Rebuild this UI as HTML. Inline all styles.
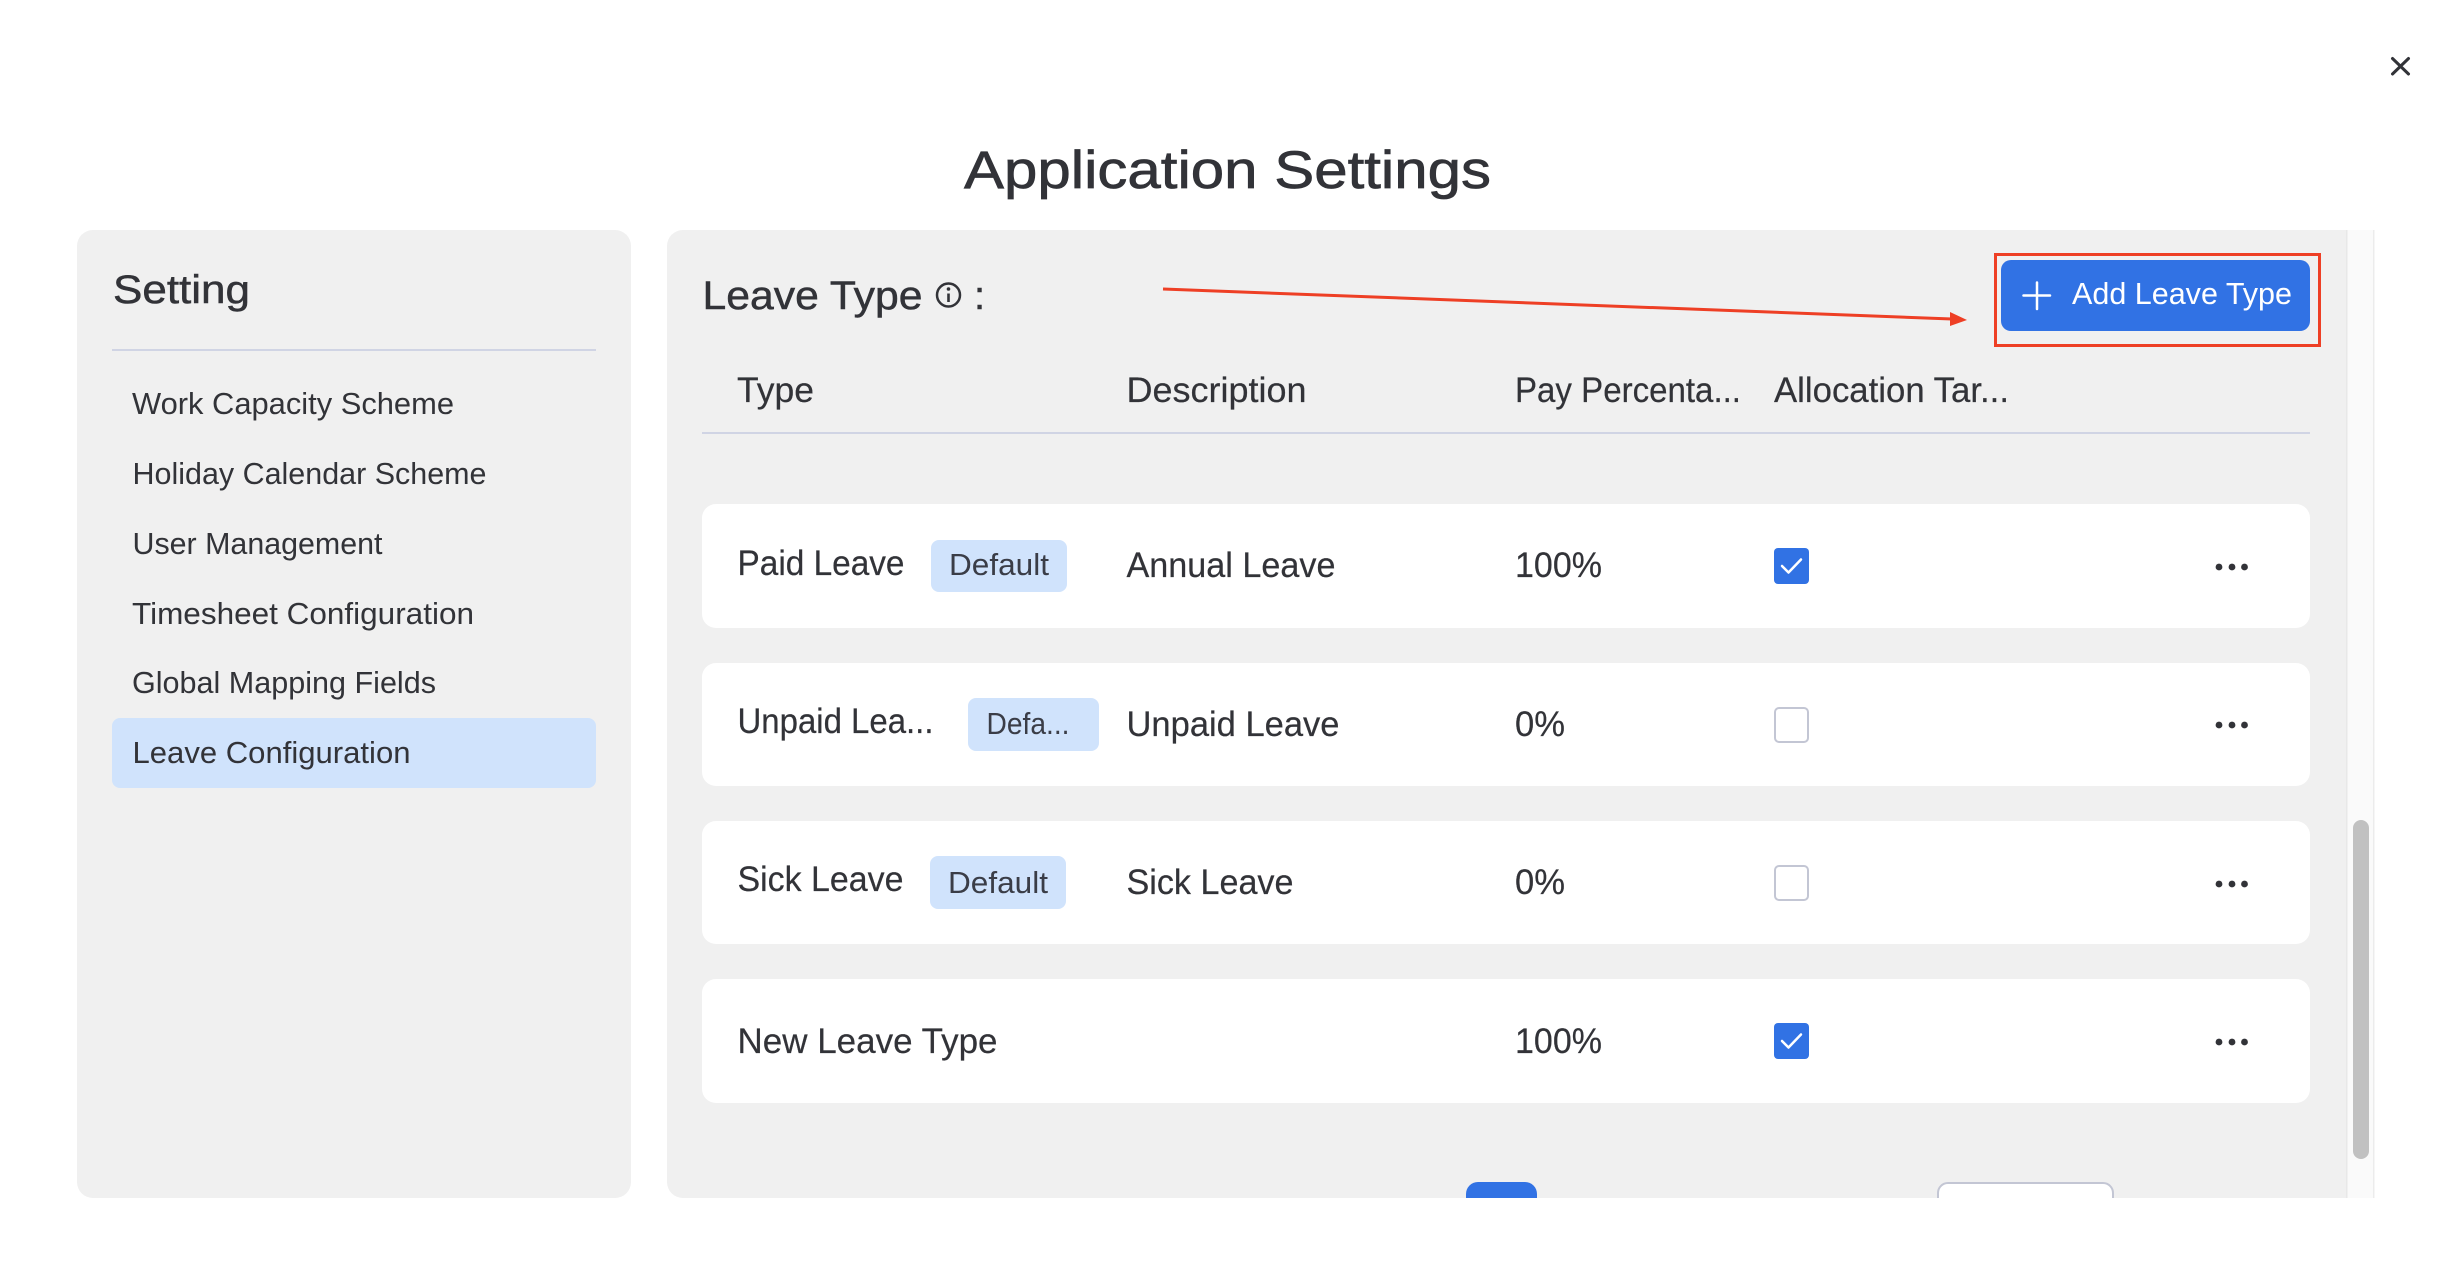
<!DOCTYPE html>
<html lang="en">
<head>
<meta charset="utf-8">
<title>Application Settings</title>
<style>
html,body{margin:0;padding:0;width:2448px;height:1266px;overflow:hidden;background:#fff}
svg{display:block}
text{font-family:"Liberation Sans",sans-serif;fill:#323338}
.h{font-size:53px;stroke:#323338;stroke-width:.7px}
.s{font-size:40px;stroke:#323338;stroke-width:.5px}
.t{font-size:35px;stroke:#323338;stroke-width:.2px}
.m{font-size:31px}
.r{font-size:35px;stroke:#323338;stroke-width:.2px}
.b{font-size:31px;fill:#3a3d47}
</style>
</head>
<body>
<svg width="2448" height="1266" viewBox="0 0 2448 1266" xmlns="http://www.w3.org/2000/svg">
<defs>
<clipPath id="clip"><rect x="0" y="230" width="2448" height="968"/></clipPath>
</defs>
<rect width="2448" height="1266" fill="#fff"/>

<!-- close -->
<path d="M2392.500 58.500L2408.500 74M2408.500 58.500L2392.500 74" stroke="#323338" stroke-width="3" stroke-linecap="round" fill="none"/>

<!-- title -->
<text class="h" x="964" y="188" textLength="527" lengthAdjust="spacingAndGlyphs">Application Settings</text>

<!-- left panel -->
<path d="M77 246a16 16 0 0 1 16-16H615a16 16 0 0 1 16 16V1182a16 16 0 0 1-16 16H93a16 16 0 0 1-16-16Z" fill="#f0f0f0"/>
<text class="s" x="113" y="303" textLength="137" lengthAdjust="spacingAndGlyphs">Setting</text>
<rect x="112" y="349" width="484" height="2" fill="#d0d4e4"/>
<text class="m" x="132" y="414" textLength="322" lengthAdjust="spacingAndGlyphs">Work Capacity Scheme</text>
<text class="m" x="132.500" y="484" textLength="354" lengthAdjust="spacingAndGlyphs">Holiday Calendar Scheme</text>
<text class="m" x="132.500" y="554" textLength="250" lengthAdjust="spacingAndGlyphs">User Management</text>
<text class="m" x="132" y="624" textLength="342" lengthAdjust="spacingAndGlyphs">Timesheet Configuration</text>
<text class="m" x="132" y="693" textLength="304" lengthAdjust="spacingAndGlyphs">Global Mapping Fields</text>
<rect x="112" y="718" width="484" height="70" rx="8" fill="#d0e3fc"/>
<text class="m" x="132.500" y="763" textLength="278" lengthAdjust="spacingAndGlyphs">Leave Configuration</text>

<!-- right panel -->
<path d="M683 230H2347V1198H683a16 16 0 0 1-16-16V246a16 16 0 0 1 16-16Z" fill="#f0f0f0"/>

<!-- scrollbar -->
<rect x="2346" y="230" width="28" height="968" fill="#fafafa"/>
<rect x="2346" y="230" width="1.500" height="968" fill="#e8e8e8"/>
<rect x="2373" y="230" width="1.500" height="968" fill="#ececec"/>
<rect x="2353" y="820" width="16" height="339" rx="8" fill="#c1c1c1"/>

<!-- header -->
<text class="s" x="702.500" y="309" textLength="220" lengthAdjust="spacingAndGlyphs">Leave Type</text>
<circle cx="948.500" cy="295" r="11.500" fill="none" stroke="#323338" stroke-width="2.500"/>
<circle cx="948.500" cy="289" r="1.800" fill="#323338"/>
<path d="M948.500 293.500V302" stroke="#323338" stroke-width="2.600" fill="none"/>
<text class="s" x="974" y="309">:</text>

<!-- annotation -->
<path d="M1163 289L1952 319" stroke="#ee3f25" stroke-width="3" fill="none"/>
<path d="M1950 312L1967 320L1950 326Z" fill="#ee3f25"/>
<rect x="1995.500" y="254.500" width="324" height="91" fill="none" stroke="#ee3f25" stroke-width="3"/>

<!-- add button -->
<rect x="2001" y="260" width="309" height="71" rx="10" fill="#3172e4"/>
<path d="M2023.500 295.500H2050M2037 282.500V309" stroke="#fff" stroke-width="2.500" stroke-linecap="round" fill="none"/>
<text class="m" x="2072" y="304" textLength="220" lengthAdjust="spacingAndGlyphs" style="fill:#fff">Add Leave Type</text>

<!-- table head -->
<text class="t" x="737" y="402" textLength="77" lengthAdjust="spacingAndGlyphs">Type</text>
<text class="t" x="1126.500" y="402" textLength="180" lengthAdjust="spacingAndGlyphs">Description</text>
<text class="t" x="1515" y="402" textLength="226" lengthAdjust="spacingAndGlyphs">Pay Percenta...</text>
<text class="t" x="1774" y="402" textLength="235" lengthAdjust="spacingAndGlyphs">Allocation Tar...</text>
<rect x="702" y="432" width="1608" height="2" fill="#d0d4e4"/>

<!-- rows -->
<rect x="702" y="504" width="1608" height="124" rx="14" fill="#fff"/>
<rect x="702" y="663" width="1608" height="123" rx="14" fill="#fff"/>
<rect x="702" y="821" width="1608" height="123" rx="14" fill="#fff"/>
<rect x="702" y="979" width="1608" height="124" rx="14" fill="#fff"/>

<!-- row 1 -->
<text class="r" x="737.500" y="575" textLength="167" lengthAdjust="spacingAndGlyphs">Paid Leave</text>
<rect x="931" y="540" width="136" height="52" rx="8" fill="#d0e3fc"/>
<text class="b" x="949" y="575" textLength="100" lengthAdjust="spacingAndGlyphs">Default</text>
<text class="r" x="1126.500" y="577" textLength="209" lengthAdjust="spacingAndGlyphs">Annual Leave</text>
<text class="r" x="1515" y="577" textLength="87" lengthAdjust="spacingAndGlyphs">100%</text>
<rect x="1774" y="548" width="35" height="36" rx="4" fill="#3172e4"/>
<path d="M1782 566L1788.500 572.500L1801 559.500" stroke="#fff" stroke-width="2.500" stroke-linecap="round" stroke-linejoin="round" fill="none"/>
<circle cx="2219" cy="567" r="3.400" fill="#323338"/><circle cx="2232" cy="567" r="3.400" fill="#323338"/><circle cx="2244.500" cy="567" r="3.400" fill="#323338"/>

<!-- row 2 -->
<text class="r" x="737.500" y="733" textLength="196" lengthAdjust="spacingAndGlyphs">Unpaid Lea...</text>
<rect x="968" y="698" width="131" height="53" rx="8" fill="#d0e3fc"/>
<text class="b" x="986.500" y="734" textLength="83" lengthAdjust="spacingAndGlyphs">Defa...</text>
<text class="r" x="1126.500" y="736" textLength="213" lengthAdjust="spacingAndGlyphs">Unpaid Leave</text>
<text class="r" x="1515" y="736" textLength="50" lengthAdjust="spacingAndGlyphs">0%</text>
<rect x="1775" y="708" width="33" height="34" rx="4" fill="#fff" stroke="#c3c6d4" stroke-width="2"/>
<circle cx="2219" cy="725" r="3.400" fill="#323338"/><circle cx="2232" cy="725" r="3.400" fill="#323338"/><circle cx="2244.500" cy="725" r="3.400" fill="#323338"/>

<!-- row 3 -->
<text class="r" x="737.500" y="891" textLength="166" lengthAdjust="spacingAndGlyphs">Sick Leave</text>
<rect x="930" y="856" width="136" height="53" rx="8" fill="#d0e3fc"/>
<text class="b" x="948" y="893" textLength="100" lengthAdjust="spacingAndGlyphs">Default</text>
<text class="r" x="1126.500" y="894" textLength="167" lengthAdjust="spacingAndGlyphs">Sick Leave</text>
<text class="r" x="1515" y="894" textLength="50" lengthAdjust="spacingAndGlyphs">0%</text>
<rect x="1775" y="866" width="33" height="34" rx="4" fill="#fff" stroke="#c3c6d4" stroke-width="2"/>
<circle cx="2219" cy="884" r="3.400" fill="#323338"/><circle cx="2232" cy="884" r="3.400" fill="#323338"/><circle cx="2244.500" cy="884" r="3.400" fill="#323338"/>

<!-- row 4 -->
<text class="r" x="737.500" y="1053" textLength="260" lengthAdjust="spacingAndGlyphs">New Leave Type</text>
<text class="r" x="1515" y="1053" textLength="87" lengthAdjust="spacingAndGlyphs">100%</text>
<rect x="1774" y="1023" width="35" height="36" rx="4" fill="#3172e4"/>
<path d="M1782 1041L1788.500 1047.500L1801 1034.500" stroke="#fff" stroke-width="2.500" stroke-linecap="round" stroke-linejoin="round" fill="none"/>
<circle cx="2219" cy="1042" r="3.400" fill="#323338"/><circle cx="2232" cy="1042" r="3.400" fill="#323338"/><circle cx="2244.500" cy="1042" r="3.400" fill="#323338"/>

<!-- clipped pagination -->
<g clip-path="url(#clip)">
<rect x="1466" y="1182" width="71" height="50" rx="12" fill="#3172e4"/>
<rect x="1938" y="1183" width="175" height="50" rx="10" fill="#fff" stroke="#c3c6d4" stroke-width="2"/>
</g>
</svg>
</body>
</html>
